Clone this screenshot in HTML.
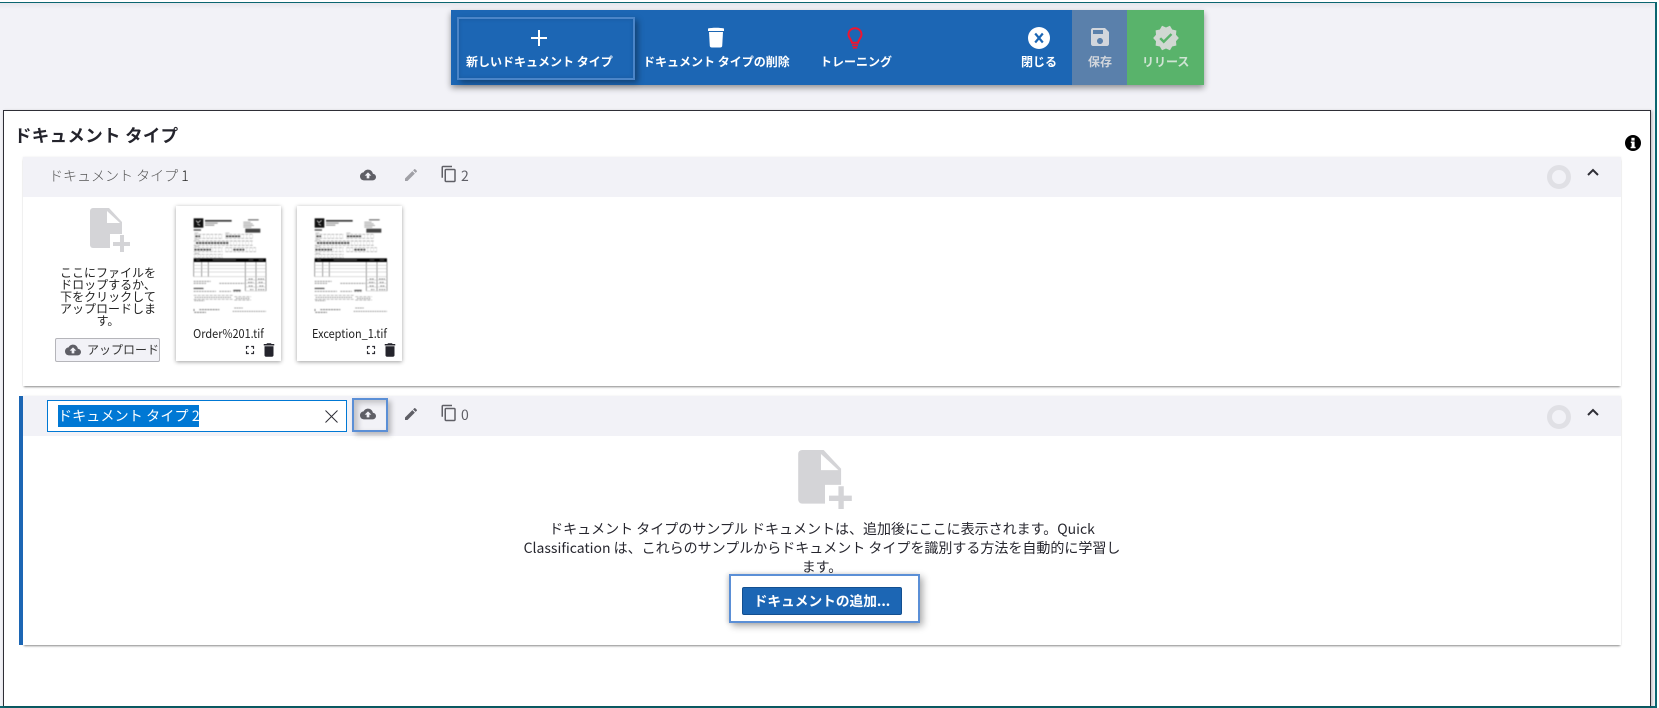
<!DOCTYPE html>
<html lang="ja"><head><meta charset="utf-8"><title>ドキュメント タイプ</title>
<style>
html,body{margin:0;padding:0;width:1659px;height:708px;overflow:hidden;background:#fff}
*{box-sizing:border-box}
body{position:relative;font-family:"Liberation Sans","Noto Sans CJK JP",sans-serif;color:#2b2b33}
.a{position:absolute}
.t{position:absolute;white-space:nowrap;font-family:"Noto Sans CJK JP","Liberation Sans",sans-serif}
.c{text-align:center}
svg{position:absolute;display:block}
.lbl{font-size:12px;font-weight:700;color:#fff;height:16px;line-height:16px;top:54px}
.th{background:#fff;box-shadow:0 1px 4px rgba(0,0,0,.38);width:105px;height:155px;top:206px}
.card{background:#fff;box-shadow:0 2px 2px -1px rgba(0,0,0,.45),0 0 2px rgba(0,0,0,.08)}
.blur{filter:blur(.45px)}
</style></head>
<body>
<svg width="0" height="0" style="position:absolute">
<symbol id="doc" viewBox="0 0 105 155">
<g transform="scale(.3333)">
<rect x="53" y="37" width="29" height="28" fill="#111"/>
<path d="M60 44l6 6 8-7M64 54l8 4" stroke="#fff" stroke-width="2" fill="none"/>
<rect x="87" y="42" width="80" height="5" fill="#333"/>
<rect x="87" y="50" width="38" height="3" fill="#888"/><rect x="87" y="56" width="28" height="3" fill="#888"/>
<rect x="216" y="40" width="32" height="3" fill="#555"/>
<g fill="#aaa"><rect x="202" y="47" width="22" height="3"/><rect x="202" y="52" width="28" height="3"/><rect x="202" y="57" width="32" height="3"/><rect x="202" y="62" width="24" height="3"/></g>
<rect x="208" y="68" width="45" height="12" fill="#444"/>
<rect x="53" y="70" width="22" height="4" fill="#444"/>
<g fill="#aaa"><rect x="55" y="80" width="12" height="2"/><rect x="148" y="80" width="12" height="2"/><rect x="55" y="100" width="14" height="2"/><rect x="55" y="120" width="14" height="2"/><rect x="55" y="141" width="14" height="2"/></g>
<g fill="none" stroke="#9a9a9a" stroke-width="2">
<path stroke-dasharray="9 3" d="M55 85H140M148 85H232M55 97H140M148 97H232M53 105H232M53 118H232M53 125H140M148 125H240M53 137H140M148 137H240M53 145H140M53 155H140"/>
<path stroke-dasharray="2 7" stroke-width="12" stroke="#ddd" d="M55 91H140M148 91H232M55 111H232M55 131H140M148 131H240M55 150H140"/>
</g>
<g fill="none" stroke="#444" stroke-width="5"><path stroke-dasharray="7 2" d="M60 111H157M55 131H105M172 131H205M58 91H72M150 91H192"/></g>
<rect x="53" y="157" width="217" height="11" fill="#000"/>
<g fill="#777"><rect x="60" y="161" width="12" height="2"/><rect x="110" y="161" width="70" height="2"/><rect x="218" y="161" width="14" height="2"/><rect x="248" y="161" width="14" height="2"/></g>
<g stroke="#666" stroke-width="1.800" fill="none"><path d="M53 168V212M270 168V255M77 168V212M97 168V212M208 168V255M240 168V255"/></g>
<g stroke="#bbb" stroke-width="1.500" fill="none"><path d="M53 178H270M53 188H270M53 198H270M53 212H270M208 222H270M208 232H270M208 243H270M208 255H270"/></g>
<g stroke="#888" stroke-width="3" fill="none" stroke-dasharray="5 2"><path d="M218 219H232M246 219H264M216 229H232M248 229H262M218 240H232M250 240H262M222 251H232M246 251H266"/></g>
<g stroke="#9a9a9a" stroke-width="3" fill="none" stroke-dasharray="6 2"><path d="M53 226H104M53 232H90M130 232H205M53 248H85M53 256H120M130 256H165M172 256H195"/></g>
<path d="M53 247H82M172 253H194" stroke="#444" stroke-width="3" fill="none"/>
<g stroke="#9a9a9a" stroke-width="2" fill="none" stroke-dasharray="9 3"><path d="M53 268H170M53 280H170M175 272H225M175 282H225"/></g>
<g stroke="#999" stroke-width="3" fill="none" stroke-dasharray="5 2"><path d="M56 274H165M180 277H220M55 284H85M175 306H200M170 316H270"/></g>
<path d="M54 309v8M70 311H130M55 319H90" stroke="#777" stroke-width="3" fill="none" stroke-dasharray="6 2"/>
</g>
</symbol>
<symbol id="cloud" viewBox="0 0 24 24"><path d="M19.35 10.04C18.67 6.59 15.64 4 12 4 9.11 4 6.6 5.64 5.35 8.04 2.34 8.36 0 10.91 0 14c0 3.31 2.69 6 6 6h13c2.76 0 5-2.24 5-5 0-2.64-2.05-4.78-4.65-4.96zM14 13v4h-4v-4H7l5-5 5 5h-3z"/></symbol>
<symbol id="pen" viewBox="0 0 24 24"><path d="M3 17.25V21h3.75L17.81 9.94l-3.75-3.75L3 17.25zM20.71 7.04c.39-.39.39-1.02 0-1.41l-2.34-2.34c-.39-.39-1.02-.39-1.41 0l-1.83 1.83 3.75 3.75 1.83-1.83z"/></symbol>
<symbol id="copy" viewBox="0 0 24 24"><path d="M16 1H4c-1.1 0-2 .9-2 2v14h2V3h12V1zm3 4H8c-1.1 0-2 .9-2 2v14c0 1.1.9 2 2 2h11c1.1 0 2-.9 2-2V7c0-1.1-.9-2-2-2zm0 16H8V7h11v14z"/></symbol>
<symbol id="trash" viewBox="0 0 24 24"><path d="M6 19c0 1.1.9 2 2 2h8c1.1 0 2-.9 2-2V7H6v12zM19 4h-3.5l-1-1h-5l-1 1H5v2h14V4z"/></symbol>
<symbol id="full" viewBox="0 0 24 24"><path d="M7 14H5v5h5v-2H7v-3zm-2-4h2V7h3V5H5v5zm12 7h-3v2h5v-5h-2v3zM14 5v2h3v3h2V5h-5z"/></symbol>
<symbol id="fadd" viewBox="0 0 40 44"><path d="M3 0H19L32 14V37a3 3 0 0 1-3 3H3a3 3 0 0 1-3-3V3a3 3 0 0 1 3-3z" fill="#d4d4d7"/><path d="M17 3V15H30z" fill="#fff"/><rect x="20" y="26" width="20" height="18" fill="#fff"/><path d="M30 27h4v7h6v4h-6v6h-4v-6h-7v-4h7z" fill="#d4d4d7"/></symbol>
</svg>

<!-- page frame -->
<div class="a" style="left:0;top:2px;width:1657px;height:706px;background:#f2f2f7;border-top:1px solid #0b6670;border-right:2px solid #0b6670;border-bottom:2px solid #0b6670"></div>
<div class="a" style="left:0;top:3px;width:1655px;height:6px;background:linear-gradient(#e6e6ec,#f2f2f7)"></div>

<!-- main panel -->
<div class="a" style="left:3px;top:110px;width:1648px;height:596px;background:#fff;border:1px solid #2e2e36;border-bottom:none;box-shadow:1px 1px 3px rgba(0,0,0,.25)"></div>
<div class="t" style="left:14px;top:123.500px;font-size:17.500px;font-weight:700;line-height:24px;color:#24242c;letter-spacing:.3px">ドキュメント タイプ</div>
<svg style="left:1625px;top:135px" width="16" height="16" viewBox="0 0 16 16"><circle cx="8" cy="8" r="8" fill="#000"/><rect x="6.400" y="2.800" width="3.200" height="2.800" fill="#fff"/><path d="M5.800 6.500h3.800v5.200h1V13.200H5.600v-1.500h1V8H5.800z" fill="#fff"/></svg>

<!-- toolbar -->
<div class="a" style="left:451px;top:10px;width:753px;height:75px;background:#1c66b4;box-shadow:0 3px 6px rgba(0,0,0,.4)"></div>
<div class="a" style="left:1072px;top:10px;width:55px;height:75px;background:#5a80ab"></div>
<div class="a" style="left:1127px;top:10px;width:77px;height:75px;background:#59b36b"></div>
<div class="a" style="left:457px;top:17px;width:178px;height:63px;border:2px solid #4b85c8;box-shadow:3px 3px 6px rgba(0,0,0,.35),inset 0 0 4px rgba(0,0,0,.12)"></div>
<svg style="left:531px;top:30px" width="16" height="16" viewBox="0 0 16 16"><path d="M7 0h2v7h7v2H9v7H7V9H0V7h7z" fill="#fff"/></svg>
<svg style="left:707px;top:27px" width="18" height="21" viewBox="0 0 18 21"><path d="M1 1.500C5 .5 13 .5 17 1.500V4H1z" fill="#fff"/><path d="M2 5h14l-.8 14c-.1 1-1 1.500-2 1.500H4.800c-1 0-1.900-.5-2-1.500z" fill="#fff"/></svg>
<svg style="left:847px;top:27px" width="16" height="22" viewBox="0 0 16 22"><path d="M8 1.200C4.300 1.200 1.500 4 1.500 7.500c0 3.200 2.800 4.500 3.500 8.300h6c.7-3.800 3.500-5.100 3.500-8.300C14.500 4 11.700 1.200 8 1.200z" fill="none" stroke="#f0142f" stroke-width="2"/><rect x="5" y="17.500" width="6" height="1.800" fill="#f0142f"/><rect x="5.800" y="20" width="4.400" height="1.600" fill="#f0142f"/></svg>
<svg style="left:1028px;top:27px" width="22" height="22" viewBox="0 0 22 22"><circle cx="11" cy="11" r="11" fill="#fff"/><path d="M7.200 6.500L14.800 15.500M14.800 6.500L7.200 15.500" stroke="#1c66b4" stroke-width="2.200"/></svg>
<svg style="left:1088px;top:25px" width="24" height="24" viewBox="0 0 24 24"><path fill="#d2d6dc" d="M17 3H5c-1.110 0-2 .9-2 2v14c0 1.100.89 2 2 2h14c1.100 0 2-.9 2-2V7l-4-4zm-5 16c-1.660 0-3-1.340-3-3s1.340-3 3-3 3 1.340 3 3-1.340 3-3 3zm3-10H5V5h10v4z"/></svg>
<svg style="left:1152px;top:24px" width="28" height="28" viewBox="0 0 24 24"><path fill="#d0d8d2" d="M23 12l-2.440-2.790.34-3.690-3.610-.82-1.890-3.200L12 2.960 8.600 1.500 6.710 4.690 3.100 5.500l.34 3.700L1 12l2.440 2.790-.34 3.700 3.610.82L8.600 22.500l3.400-1.470 3.400 1.460 1.890-3.190 3.610-.82-.34-3.690L23 12zm-12.910 4.720l-3.800-3.810 1.480-1.480 2.320 2.330 5.850-5.870 1.480 1.480-7.330 7.350z"/></svg>
<div class="t lbl" style="left:466px">新しいドキュメント タイプ</div>
<div class="t lbl" style="left:643px">ドキュメント タイプの削除</div>
<div class="t lbl" style="left:820px">トレーニング</div>
<div class="t lbl" style="left:1021px">閉じる</div>
<div class="t lbl" style="left:1088px;color:#d2d6dc">保存</div>
<div class="t lbl" style="left:1142px;color:#d0e4d4">リリース</div>

<!-- card 1 -->
<div class="a card" style="left:23px;top:157px;width:1598px;height:229px"></div>
<div class="a" style="left:23px;top:157px;width:1598px;height:40px;background:#f2f2f7"></div>
<div class="t" style="left:49px;top:165px;font-size:14px;font-weight:300;line-height:22px;color:#555">ドキュメント タイプ <span style="color:#222">1</span></div>
<svg style="left:360px;top:165px" width="16" height="20" viewBox="0 0 24 30" fill="#5f5f66"><use href="#cloud" width="24" height="30"/></svg>
<svg style="left:403px;top:167px" width="16" height="16" fill="#a0a0a6"><use href="#pen" width="16" height="16"/></svg>
<svg style="left:440px;top:165px" width="18" height="18" fill="#5f5f66"><use href="#copy" width="18" height="18"/></svg>
<div class="t" style="left:461px;top:165px;font-size:14px;line-height:22px;color:#5f5f66;font-weight:400">2</div>
<svg style="left:1547px;top:165px" width="24" height="24" viewBox="0 0 24 24"><circle cx="12" cy="12" r="9.500" fill="none" stroke="#e0e0e5" stroke-width="5"/></svg>
<svg style="left:1587px;top:168px" width="12" height="9" viewBox="0 0 12 9"><path d="M1 7L6 2l5 5" fill="none" stroke="#2e2e36" stroke-width="2"/></svg>

<svg style="left:90px;top:208px" width="40" height="44"><use href="#fadd" width="40" height="44"/></svg>
<div class="t c" style="left:48px;width:120px;top:267px;font-size:12px;line-height:12px;color:#222"><div style="height:12px">ここにファイルを</div><div style="height:12px">ドロップするか、</div><div style="height:12px">下をクリックして</div><div style="height:12.300px">アップロードしま</div><div style="height:12px">す。</div></div>
<div class="a" style="left:55px;top:338px;width:105px;height:24px;background:#f2f2f7;border:1px solid #b5b5ba;border-radius:2px;overflow:hidden"></div>
<svg style="left:65px;top:342px" width="16" height="16" fill="#5f5f66"><use href="#cloud" width="16" height="16"/></svg>
<div class="t" style="left:87px;top:340px;width:73px;overflow:hidden;font-size:12px;line-height:20px;color:#333">アップロード</div>

<div class="a th" style="left:176px"></div>
<svg class="blur" style="left:176px;top:206px" width="105" height="155"><use href="#doc" width="105" height="155"/></svg>
<div class="t c" style="left:176px;width:105px;top:325px;font-size:12px;line-height:18px;color:#222;transform:scaleX(.91)">Order%201.tif</div>
<svg style="left:243px;top:343px" width="14" height="14" fill="#2b2b33"><use href="#full" width="14" height="14"/></svg>
<svg style="left:260px;top:341px" width="18" height="18" fill="#24242c"><use href="#trash" width="18" height="18"/></svg>

<div class="a th" style="left:297px"></div>
<svg class="blur" style="left:297px;top:206px" width="105" height="155"><use href="#doc" width="105" height="155"/></svg>
<div class="t c" style="left:297px;width:105px;top:325px;font-size:12px;line-height:18px;color:#222;transform:scaleX(.91)">Exception_1.tif</div>
<svg style="left:364px;top:343px" width="14" height="14" fill="#2b2b33"><use href="#full" width="14" height="14"/></svg>
<svg style="left:381px;top:341px" width="18" height="18" fill="#24242c"><use href="#trash" width="18" height="18"/></svg>

<!-- card 2 -->
<div class="a card" style="left:23px;top:396px;width:1598px;height:249px"></div>
<div class="a" style="left:19px;top:396px;width:4px;height:249px;background:#1c66b4"></div>
<div class="a" style="left:23px;top:396px;width:1598px;height:40px;background:#f2f2f7"></div>
<div class="a" style="left:47px;top:400px;width:300px;height:32px;background:#fff;border:1px solid #0078d4"></div>
<div class="t" style="left:58px;top:405px;width:141px;height:22px;overflow:hidden;background:#0078d4;color:#fff;font-size:14px;font-weight:400;line-height:22px;letter-spacing:.15px">ドキュメント タイプ 2</div>
<svg style="left:325px;top:410px" width="13" height="13" viewBox="0 0 13 13"><path d="M.5.5l12 12M12.500.5l-12 12" stroke="#2e2e36" stroke-width="1" fill="none"/></svg>
<div class="a" style="left:352px;top:398px;width:36px;height:34px;border:2px solid #5b8fd6;box-shadow:inset 4px 3px 6px rgba(0,0,0,.2),3px 3px 5px rgba(0,0,0,.25)"></div>
<svg style="left:360px;top:406px" width="16" height="16" fill="#5f5f66"><use href="#cloud" width="16" height="16"/></svg>
<svg style="left:403px;top:406px" width="16" height="16" fill="#5f5f66"><use href="#pen" width="16" height="16"/></svg>
<svg style="left:440px;top:404px" width="18" height="18" fill="#5f5f66"><use href="#copy" width="18" height="18"/></svg>
<div class="t" style="left:461px;top:404px;font-size:14px;line-height:22px;color:#5f5f66;font-weight:400">0</div>
<svg style="left:1547px;top:405px" width="24" height="24" viewBox="0 0 24 24"><circle cx="12" cy="12" r="9.500" fill="none" stroke="#e0e0e5" stroke-width="5"/></svg>
<svg style="left:1587px;top:408px" width="12" height="9" viewBox="0 0 12 9"><path d="M1 7L6 2l5 5" fill="none" stroke="#2e2e36" stroke-width="2"/></svg>

<svg style="left:798px;top:450px" width="54" height="59"><use href="#fadd" width="54" height="59"/></svg>
<div class="t c" style="left:500px;width:644px;top:520px;font-size:14px;line-height:19px;color:#26262e">
<div style="height:19px">ドキュメント タイプのサンプル ドキュメントは、追加後にここに表示されます。Quick</div>
<div style="height:19px">Classification は、これらのサンプルからドキュメント タイプを識別する方法を自動的に学習し</div>
<div style="height:19px">ます。</div>
</div>
<div class="a" style="left:729px;top:574px;width:191px;height:49px;background:#fff;border:2px solid #5b8fd6;box-shadow:3px 3px 7px rgba(0,0,0,.32),-2px 0 4px rgba(0,0,0,.12)"></div>
<div class="t c" style="left:742px;top:587px;width:160px;height:28px;background:#1c66b4;border:1px solid #134f90;border-radius:2px;color:#fff;font-size:13.700px;font-weight:700;line-height:25px">ドキュメントの追加...</div>
</body></html>
